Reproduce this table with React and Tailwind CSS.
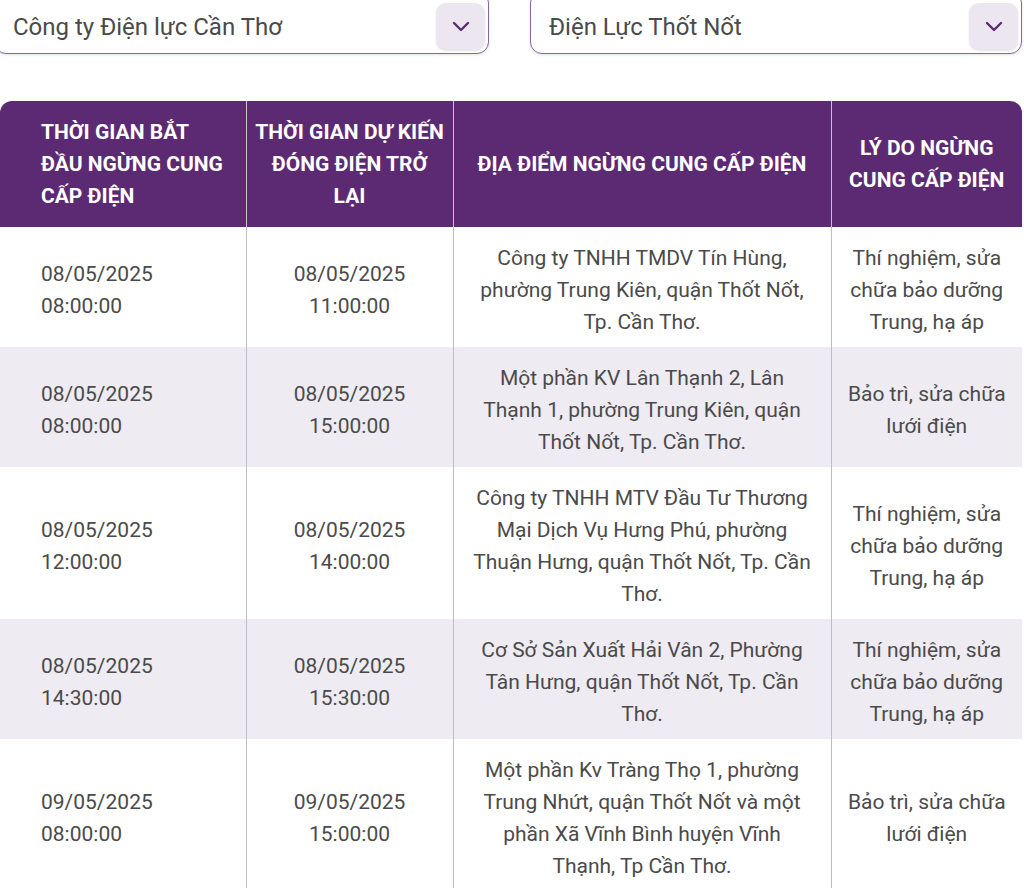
import React from 'react'

const rows = [
  {
    start: ['08/05/2025', '08:00:00'],
    end: ['08/05/2025', '11:00:00'],
    place: 'Công ty TNHH TMDV Tín Hùng, phường Trung Kiên, quận Thốt Nốt, Tp. Cần Thơ.',
    reason: 'Thí nghiệm, sửa chữa bảo dưỡng Trung, hạ áp',
  },
  {
    start: ['08/05/2025', '08:00:00'],
    end: ['08/05/2025', '15:00:00'],
    place: 'Một phần KV Lân Thạnh 2, Lân Thạnh 1, phường Trung Kiên, quận Thốt Nốt, Tp. Cần Thơ.',
    reason: 'Bảo trì, sửa chữa lưới điện',
  },
  {
    start: ['08/05/2025', '12:00:00'],
    end: ['08/05/2025', '14:00:00'],
    place: 'Công ty TNHH MTV Đầu Tư Thương Mại Dịch Vụ Hưng Phú, phường Thuận Hưng, quận Thốt Nốt, Tp. Cần Thơ.',
    reason: 'Thí nghiệm, sửa chữa bảo dưỡng Trung, hạ áp',
  },
  {
    start: ['08/05/2025', '14:30:00'],
    end: ['08/05/2025', '15:30:00'],
    place: 'Cơ Sở Sản Xuất Hải Vân 2, Phường Tân Hưng, quận Thốt Nốt, Tp. Cần Thơ.',
    reason: 'Thí nghiệm, sửa chữa bảo dưỡng Trung, hạ áp',
  },
  {
    start: ['09/05/2025', '08:00:00'],
    end: ['09/05/2025', '15:00:00'],
    place: 'Một phần Kv Tràng Thọ 1, phường Trung Nhứt, quận Thốt Nốt và một phần Xã Vĩnh Bình huyện Vĩnh Thạnh, Tp Cần Thơ.',
    reason: 'Bảo trì, sửa chữa lưới điện',
  },
]

function Select({ label, className }) {
  return (
    <div className={`relative h-[63px] rounded-[12px] border border-[#8a65a0] bg-white shadow-[0_1px_3px_rgba(0,0,0,0.12)] flex items-center ${className}`}>
      <span className="pl-[18px] pt-[9px] text-[24px] text-[#4a4a4a]">{label}</span>
      <div className="absolute right-[3px] bottom-[3px] w-[49px] h-[47px] rounded-[10px] bg-[#ece6f0] shadow-[0_1px_2px_rgba(0,0,0,0.12)] flex items-center justify-center">
        <svg width="18" height="11" viewBox="0 0 18 11" fill="none">
          <path d="M2 2l7 7 7-7" stroke="#5a2a72" strokeWidth="2.4" strokeLinecap="round" strokeLinejoin="round" />
        </svg>
      </div>
    </div>
  )
}

export default function App() {
  return (
    <div className="bg-white min-h-screen overflow-hidden font-['Roboto',sans-serif]">
      <div className="flex gap-[41px] -mt-[9px] -ml-[6px] pr-[2px]">
        <Select label="Công ty Điện lực Cần Thơ" className="w-[495px]" />
        <Select label="Điện Lực Thốt Nốt" className="w-[492px]" />
      </div>

      <div className="mt-[47px] w-[1022px] rounded-t-[12px] overflow-hidden">
        <table className="w-full table-fixed border-collapse text-[21px] leading-[32px] text-[#4a4a4a]">
          <colgroup>
            <col className="w-[246px]" />
            <col className="w-[207px]" />
            <col className="w-[378px]" />
            <col className="w-[191px]" />
          </colgroup>
          <thead>
            <tr className="bg-[#5c2a72] text-white text-[21px]">
              <th className="pl-[41px] pr-4 py-[15px] text-left align-middle font-bold">THỜI GIAN BẮT ĐẦU NGỪNG CUNG CẤP ĐIỆN</th>
              <th className="px-2 py-[15px] text-center border-l border-[#c9c4cc] font-bold">THỜI GIAN DỰ KIẾN ĐÓNG ĐIỆN TRỞ LẠI</th>
              <th className="px-3 py-[15px] text-center border-l border-[#c9c4cc] font-bold">ĐỊA ĐIỂM NGỪNG CUNG CẤP ĐIỆN</th>
              <th className="px-3 py-[15px] text-center border-l border-[#c9c4cc] font-bold">LÝ DO NGỪNG CUNG CẤP ĐIỆN</th>
            </tr>
          </thead>
          <tbody>
            {rows.map((r, i) => (
              <tr key={i} className={i % 2 === 1 ? 'bg-[#efebf2]' : 'bg-white'}>
                <td className="pl-[41px] pr-4 pt-[15px] pb-[9px] text-left align-middle">
                  {r.start[0]}<br />{r.start[1]}
                </td>
                <td className="px-2 pt-[15px] pb-[9px] text-center border-l border-[#bdbdbd] align-middle">
                  {r.end[0]}<br />{r.end[1]}
                </td>
                <td className="px-4 pt-[15px] pb-[9px] text-center border-l border-[#bdbdbd] align-middle">{r.place}</td>
                <td className="px-4 pt-[15px] pb-[9px] text-center border-l border-[#bdbdbd] align-middle">{r.reason}</td>
              </tr>
            ))}
          </tbody>
        </table>
      </div>
    </div>
  )
}
